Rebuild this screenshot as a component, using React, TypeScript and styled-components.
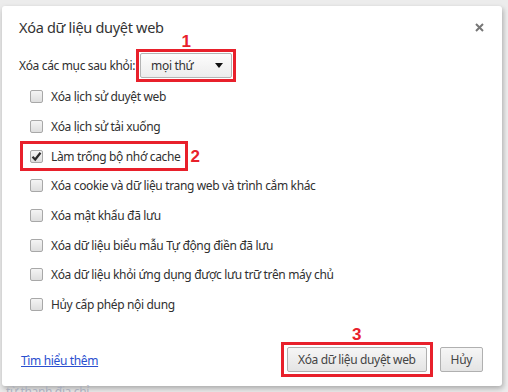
import styled, { createGlobalStyle } from "styled-components";

const GlobalStyle = createGlobalStyle`
	html, body {
		margin: 0;
		padding: 0;
		background: #ececec;
	}
	body {
		font-family: "Noto Sans", "Open Sans", sans-serif;
		color: #303030;
		letter-spacing: -0.35px;
	}
`;

const RED = "#e8202b";

const Page = styled.div`
	width: 508px;
	height: 392px;
	overflow: hidden;
	padding: 6px 0 0 2px;
	box-sizing: border-box;
	background: #ececec;
`;

const Dialog = styled.div`
	width: 500px;
	height: 380px;
	box-sizing: border-box;
	background: #fff;
	border-radius: 3px;
	box-shadow: 0 3px 6px rgba(0, 0, 0, 0.18), 2px 2px 4px rgba(0, 0, 0, 0.12);
	display: flex;
	flex-direction: column;
	padding: 11px 19px 9px 17px;
`;

const Header = styled.div`
	display: flex;
	align-items: center;
	justify-content: space-between;
	height: 20px;
`;

const Title = styled.h1`
	margin: 0;
	font-size: 14.5px;
	font-weight: normal;
	color: #333;
	line-height: 20px;
	letter-spacing: -0.3px;
`;

const CloseButton = styled.button`
	border: none;
	background: none;
	padding: 0;
	width: 10px;
	height: 10px;
	margin-right: -1px;
	display: flex;
	align-items: center;
	justify-content: center;
	cursor: pointer;
`;

const SelectRow = styled.div`
	display: flex;
	align-items: center;
	margin-top: 12px;
	height: 33px;
	font-size: 12px;
`;

const SelectLabel = styled.span`
	margin-right: 1px;
`;

const Highlight = styled.div<{ $pad: string }>`
	position: relative;
	display: inline-flex;
	align-items: center;
	border: 3px solid ${RED};
	padding: ${(p) => p.$pad};
	box-sizing: border-box;
	background: transparent;
`;

const Badge = styled.span<{ $pos: "top" | "right" }>`
	position: absolute;
	font-family: "Liberation Sans", Arial, sans-serif;
	font-weight: bold;
	font-size: 17px;
	letter-spacing: 0;
	color: ${RED};
	line-height: 1;
	${(p) =>
		p.$pos === "top"
			? "left: 50%; bottom: 100%; margin-bottom: 2px; transform: translateX(-50%);"
			: "left: 100%; top: 50%; margin-left: 5px; transform: translateY(-50%);"}
`;

const Dropdown = styled.div`
	width: 92px;
	height: 25px;
	box-sizing: border-box;
	border: 1px solid #b4b4b4;
	border-radius: 2px;
	background: linear-gradient(#fdfdfd, #ececec);
	display: flex;
	align-items: center;
	justify-content: space-between;
	padding: 0 8px 0 10px;
	color: #333;
	font-size: 12px;
`;

const Arrow = styled.span`
	width: 0;
	height: 0;
	border-left: 4.5px solid transparent;
	border-right: 4.5px solid transparent;
	border-top: 5px solid #111;
`;

const CheckList = styled.div`
	display: flex;
	flex-direction: column;
	padding-left: 11px;
`;

const CheckRow = styled.label`
	display: flex;
	align-items: center;
	height: 29.7px;
	gap: 8px;
	font-size: 12px;
	color: #303030;
`;

const HighlightRow = styled(Highlight)`
	height: 29.7px;
	margin-left: -10px;
	align-self: flex-start;
	gap: 8px;
	font-size: 12px;
`;

const Box = styled.span`
	width: 13px;
	height: 13px;
	box-sizing: border-box;
	border: 1px solid #a8a8a8;
	border-radius: 2px;
	background: linear-gradient(#f4f4f4, #dedede);
	display: flex;
	align-items: center;
	justify-content: center;
	flex-shrink: 0;
`;

const Footer = styled.div`
	margin-top: auto;
	display: flex;
	align-items: center;
	justify-content: space-between;
`;

const LearnMore = styled.a`
	color: #2a4fcf;
	text-decoration: underline;
	font-size: 12px;
	margin-left: 2px;
	margin-top: 2px;
`;

const Actions = styled.div`
	display: flex;
	align-items: center;
	gap: 7px;
`;

const Button = styled.button`
	height: 25px;
	box-sizing: border-box;
	border: 1px solid #b0b0b0;
	border-radius: 2px;
	background: linear-gradient(#f6f6f6, #e4e4e4);
	font-family: "Noto Sans", "Open Sans", sans-serif;
	font-size: 12px;
	letter-spacing: -0.35px;
	color: #444;
	padding: 0 10px;
`;

const BehindText = styled.div`
	font-size: 12px;
	color: #a9aebc;
	padding-left: 4px;
	line-height: 16px;
	margin-top: -2px;
`;

const items = [
	"Xóa lịch sử duyệt web",
	"Xóa lịch sử tải xuống",
	"Làm trống bộ nhớ cache",
	"Xóa cookie và dữ liệu trang web và trình cắm khác",
	"Xóa mật khẩu đã lưu",
	"Xóa dữ liệu biểu mẫu Tự động điền đã lưu",
	"Xóa dữ liệu khỏi ứng dụng được lưu trữ trên máy chủ",
	"Hủy cấp phép nội dung",
];

const Check = () => (
	<svg width="11" height="11" viewBox="0 0 11 11">
		<path d="M1.5 5.8 L4.2 8.5 L9.5 1.8" fill="none" stroke="#2b2b2b" strokeWidth="2.2" />
	</svg>
);

const App = () => {
	return (
		<>
			<GlobalStyle />
			<Page>
				<Dialog>
					<Header>
						<Title>Xóa dữ liệu duyệt web</Title>
						<CloseButton aria-label="Đóng">
							<svg width="9" height="9" viewBox="0 0 9 9">
								<path d="M1 1 L8 8 M8 1 L1 8" stroke="#777" strokeWidth="2" />
							</svg>
						</CloseButton>
					</Header>
					<SelectRow>
						<SelectLabel>Xóa các mục sau khỏi:</SelectLabel>
						<Highlight $pad="1px 1px">
							<Badge $pos="top">1</Badge>
							<Dropdown>
								<span>mọi thứ</span>
								<Arrow />
							</Dropdown>
						</Highlight>
					</SelectRow>
					<CheckList>
						{items.map((text, i) =>
							i === 2 ? (
								<HighlightRow key={i} $pad="0 5px 0 7px">
									<Badge $pos="right">2</Badge>
									<Box>
										<Check />
									</Box>
									<span>{text}</span>
								</HighlightRow>
							) : (
								<CheckRow key={i}>
									<Box />
									<span>{text}</span>
								</CheckRow>
							)
						)}
					</CheckList>
					<Footer>
						<LearnMore href="#">Tìm hiểu thêm</LearnMore>
						<Actions>
							<Highlight $pad="2px 3px">
								<Badge $pos="top">3</Badge>
								<Button>Xóa dữ liệu duyệt web</Button>
							</Highlight>
							<Button>Hủy</Button>
						</Actions>
					</Footer>
				</Dialog>
				<BehindText>từ thanh địa chỉ.</BehindText>
			</Page>
		</>
	);
};

export default App;
